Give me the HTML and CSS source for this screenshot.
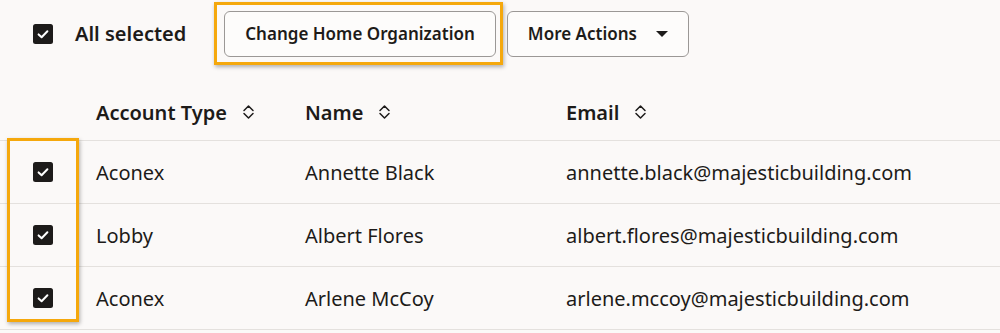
FILE: index.html
```html
<!DOCTYPE html>
<html lang="en">
<head>
<meta charset="utf-8">
<link rel="stylesheet" href="styles.css">
</head>
<body>
<div class="page">
  <div class="toolbar">
    <span class="check check-all"><svg viewBox="0 0 20 20" width="20" height="20"><rect x="0" y="0" width="20" height="20" rx="2.5" fill="#1d1b1a"/><path d="M5.6 10.4 L8.6 13.2 L14.4 7.2" fill="none" stroke="#fff" stroke-width="2" stroke-linecap="round" stroke-linejoin="round"/></svg></span>
    <span class="all-label">All selected</span>
    <div class="highlight-btn">
      <button class="btn">Change Home Organization</button>
    </div>
    <button class="btn btn-menu">More Actions <svg class="caret" viewBox="0 0 12 6" width="12" height="6"><path d="M0 0 H12 L6 6 Z" fill="#1d1b1a"/></svg></button>
  </div>

  <div class="table">
    <div class="col-highlight"></div>
    <div class="row head">
      <div class="cell sel"></div>
      <div class="cell">Account Type <svg class="sort" viewBox="0 0 13 16" width="13" height="16"><path d="M2 6.5 L6.5 2 L11 6.5 M2 9.5 L6.5 14 L11 9.5" fill="none" stroke="#1d1b1a" stroke-width="1.5" stroke-linecap="round" stroke-linejoin="round"/></svg></div>
      <div class="cell">Name <svg class="sort" viewBox="0 0 13 16" width="13" height="16"><path d="M2 6.5 L6.5 2 L11 6.5 M2 9.5 L6.5 14 L11 9.5" fill="none" stroke="#1d1b1a" stroke-width="1.5" stroke-linecap="round" stroke-linejoin="round"/></svg></div>
      <div class="cell">Email <svg class="sort" viewBox="0 0 13 16" width="13" height="16"><path d="M2 6.5 L6.5 2 L11 6.5 M2 9.5 L6.5 14 L11 9.5" fill="none" stroke="#1d1b1a" stroke-width="1.5" stroke-linecap="round" stroke-linejoin="round"/></svg></div>
      <div class="cell"></div>
    </div>
    <div class="row">
      <div class="cell sel"><span class="check"><svg viewBox="0 0 20 20" width="20" height="20"><rect x="0" y="0" width="20" height="20" rx="2.5" fill="#1d1b1a"/><path d="M5.6 10.4 L8.6 13.2 L14.4 7.2" fill="none" stroke="#fff" stroke-width="2" stroke-linecap="round" stroke-linejoin="round"/></svg></span></div>
      <div class="cell">Aconex</div>
      <div class="cell">Annette Black</div>
      <div class="cell">annette.black@majesticbuilding.com</div>
      <div class="cell"></div>
    </div>
    <div class="row">
      <div class="cell sel"><span class="check"><svg viewBox="0 0 20 20" width="20" height="20"><rect x="0" y="0" width="20" height="20" rx="2.5" fill="#1d1b1a"/><path d="M5.6 10.4 L8.6 13.2 L14.4 7.2" fill="none" stroke="#fff" stroke-width="2" stroke-linecap="round" stroke-linejoin="round"/></svg></span></div>
      <div class="cell">Lobby</div>
      <div class="cell">Albert Flores</div>
      <div class="cell">albert.flores@majesticbuilding.com</div>
      <div class="cell"></div>
    </div>
    <div class="row">
      <div class="cell sel"><span class="check"><svg viewBox="0 0 20 20" width="20" height="20"><rect x="0" y="0" width="20" height="20" rx="2.5" fill="#1d1b1a"/><path d="M5.6 10.4 L8.6 13.2 L14.4 7.2" fill="none" stroke="#fff" stroke-width="2" stroke-linecap="round" stroke-linejoin="round"/></svg></span></div>
      <div class="cell">Aconex</div>
      <div class="cell">Arlene McCoy</div>
      <div class="cell">arlene.mccoy@majesticbuilding.com</div>
      <div class="cell"></div>
    </div>
  </div>
</div>
</body>
</html>
```

FILE: styles.css
```css
* { box-sizing: border-box; }
html, body {
  margin: 0;
  padding: 0;
  background: #fbf9f8;
}
body {
  font-family: "Noto Sans", "Open Sans", sans-serif;
  color: #1d1b19;
  width: 1000px;
  height: 333px;
  overflow: hidden;
}
.page { position: relative; }

.toolbar {
  display: flex;
  align-items: center;
  height: 67px;
  padding-left: 33px;
}
.check {
  display: inline-flex;
  width: 20px;
  height: 20px;
}
.check svg { display: block; }
.all-label {
  margin-left: 22px;
  font-size: 20px;
  font-weight: 600;
}
.highlight-btn {
  margin-left: 28px;
  border: 3px solid #f5a80c;
  padding: 6px 4px 5px 7px;
  box-shadow: 1px 2px 4px rgba(0, 0, 0, 0.3);
  margin-top: -1px;
}
.btn {
  font-family: inherit;
  font-size: 17px;
  font-weight: 600;
  color: #1d1b19;
  height: 46px;
  padding: 0 20px;
  background: #fdfcfb;
  border: 1px solid #9b9896;
  border-radius: 6px;
  display: inline-flex;
  align-items: center;
}
.btn-menu {
  margin-left: 4px;
  padding: 0 20px;
}
.caret { margin-left: 19px; }

.table {
  position: relative;
  margin-top: 13px;
}
.row {
  display: grid;
  grid-template-columns: 78px 209px 261px 1fr 0;
  height: 63px;
  border-bottom: 1px solid #e4e1de;
  font-size: 20px;
}
.row.head {
  height: 61px;
  font-weight: 600;
  padding-top: 4px;
}
.cell {
  display: flex;
  align-items: center;
  padding-left: 18px;
  white-space: nowrap;
}
.cell.sel {
  padding-left: 33px;
}
.sort { margin-left: 15px; }

.col-highlight {
  position: absolute;
  left: 7px;
  top: 58px;
  width: 72px;
  height: 184px;
  border: 3px solid #f5a80c;
  box-shadow: 1px 2px 4px rgba(0, 0, 0, 0.3);
  pointer-events: none;
}
```
